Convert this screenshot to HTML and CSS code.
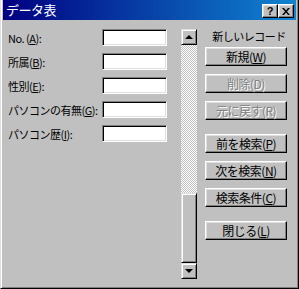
FILE: index.html
```html
<!DOCTYPE html>
<html lang="ja">
<head>
    <meta charset="UTF-8">
    <title>データ表</title>
    <link rel="stylesheet" href="styles.css">
</head>
<body>

<div class="window">
    <div class="titlebar">
        <span class="title">データ表</span>
        <div class="title-buttons">
            <span class="tbtn help">?</span>
            <span class="tbtn close">
                <svg width="8" height="7" viewBox="0 0 8 7">
                    <path d="M0 0h2l2 2.5L6 0h2L5 3.5 8 7H6L4 4.5 2 7H0l3-3.5z" fill="#000"/>
                </svg>
            </span>
        </div>
    </div>

    <div class="client">
        <div class="fields">
            <div class="field">
                <label>No. (<u>A</u>):</label>
                <input type="text" class="textbox">
            </div>
            <div class="field">
                <label>所属(<u>B</u>):</label>
                <input type="text" class="textbox">
            </div>
            <div class="field">
                <label>性別(<u>E</u>):</label>
                <input type="text" class="textbox">
            </div>
            <div class="field">
                <label>パソコンの有無(<u>G</u>):</label>
                <input type="text" class="textbox">
            </div>
            <div class="field">
                <label>パソコン歴(<u>I</u>):</label>
                <input type="text" class="textbox">
            </div>
        </div>

        <div class="scrollbar">
            <div class="sbtn"><span class="arrow up"></span></div>
            <div class="track"></div>
            <div class="thumb"></div>
            <div class="sbtn"><span class="arrow down"></span></div>
        </div>

        <div class="actions">
            <div class="record-label">新しいレコード</div>
            <div class="group">
                <button class="btn">新規(<u>W</u>)</button>
                <button class="btn" disabled>削除(D)</button>
                <button class="btn" disabled>元に戻す(R)</button>
            </div>
            <div class="group">
                <button class="btn">前を検索(<u>P</u>)</button>
                <button class="btn">次を検索(<u>N</u>)</button>
                <button class="btn">検索条件(<u>C</u>)</button>
            </div>
            <div class="group">
                <button class="btn">閉じる(<u>L</u>)</button>
            </div>
        </div>
    </div>
</div>

</body>
</html>
```

FILE: styles.css
```css
body {
    margin: 0;
    padding: 0;
    font-family: "Noto Sans CJK JP", "Liberation Sans", sans-serif;
    font-size: 12px;
    background-color: #c0c0c0;
}
.window {
    box-sizing: border-box;
    width: 299px;
    height: 289px;
    background-color: #c0c0c0;
    border-left: 1px solid #dfdfdf;
    border-right: 1px solid #000;
    border-bottom: 1px solid #000;
    box-shadow: inset 1px 0 #fff, inset -1px -1px #808080;
    padding: 0 2px 2px 2px;
    display: flex;
    flex-direction: column;
}
.titlebar {
    height: 20px;
    display: flex;
    align-items: center;
    justify-content: space-between;
    background: linear-gradient(to right, #000080, #1084d0);
    color: white;
    padding: 0 2px 0 3px;
}
.title {
    font-size: 13px;
    line-height: 20px;
    letter-spacing: -0.5px;
}
.title-buttons {
    display: flex;
    margin-top: 2px;
}
.tbtn {
    box-sizing: border-box;
    width: 16px;
    height: 14px;
    background-color: #c0c0c0;
    border: 1px solid;
    border-color: #fff #000 #000 #fff;
    box-shadow: inset -1px -1px #808080, inset 1px 1px #dfdfdf;
    display: flex;
    align-items: center;
    justify-content: center;
    color: #000;
}
.help {
    font-family: "Liberation Sans", sans-serif;
    font-weight: bold;
    font-size: 11px;
    line-height: 1;
}
.client {
    display: flex;
    padding-top: 9px;
}
.fields {
    display: flex;
    flex-direction: column;
    gap: 7px;
    padding-left: 5px;
}
.field {
    display: flex;
    align-items: center;
    height: 17px;
}
.field label {
    width: 94px;
    font-size: 11px;
    letter-spacing: -0.5px;
    white-space: nowrap;
}
.textbox {
    box-sizing: border-box;
    width: 65px;
    height: 17px;
    margin: 0;
    padding: 0;
    background: #fff;
    border: 1px solid;
    border-color: #808080 #fff #fff #808080;
    box-shadow: inset 1px 1px #000, inset -1px -1px #dfdfdf;
}
.scrollbar {
    margin-left: 14px;
    width: 16px;
    height: 250px;
    display: flex;
    flex-direction: column;
}
.sbtn {
    box-sizing: border-box;
    height: 16px;
    background-color: #c0c0c0;
    border: 1px solid;
    border-color: #dfdfdf #000 #000 #dfdfdf;
    box-shadow: inset 1px 1px #fff, inset -1px -1px #808080;
    display: flex;
    align-items: center;
    justify-content: center;
}
.arrow {
    width: 0;
    height: 0;
    border-left: 4px solid transparent;
    border-right: 4px solid transparent;
}
.arrow.up {
    border-bottom: 4px solid #000;
}
.arrow.down {
    border-top: 4px solid #000;
}
.track {
    flex: 1;
    background: repeating-conic-gradient(#fff 0 25%, #c0c0c0 0 50%) 0 0 / 2px 2px;
}
.thumb {
    box-sizing: border-box;
    height: 70px;
    background-color: #c0c0c0;
    border: 1px solid;
    border-color: #dfdfdf #000 #000 #dfdfdf;
    box-shadow: inset 1px 1px #fff, inset -1px -1px #808080;
}
.actions {
    margin-left: 8px;
    width: 82px;
    display: flex;
    flex-direction: column;
}
.record-label {
    height: 18px;
    line-height: 14px;
    font-size: 11px;
    text-align: center;
    letter-spacing: -0.5px;
    white-space: nowrap;
    padding-left: 6px;
}
.group {
    display: flex;
    flex-direction: column;
    gap: 8px;
    margin-bottom: 14px;
}
.btn {
    box-sizing: border-box;
    width: 82px;
    height: 19px;
    margin: 0;
    padding: 0;
    font-family: inherit;
    font-size: 12px;
    line-height: 1;
    letter-spacing: -0.5px;
    color: #000;
    background-color: #c0c0c0;
    border: 1px solid;
    border-color: #fff #000 #000 #fff;
    box-shadow: inset -1px -1px #808080, inset 1px 1px #dfdfdf;
}
.btn:disabled {
    color: #808080;
    text-shadow: 1px 1px #fff;
}
```
